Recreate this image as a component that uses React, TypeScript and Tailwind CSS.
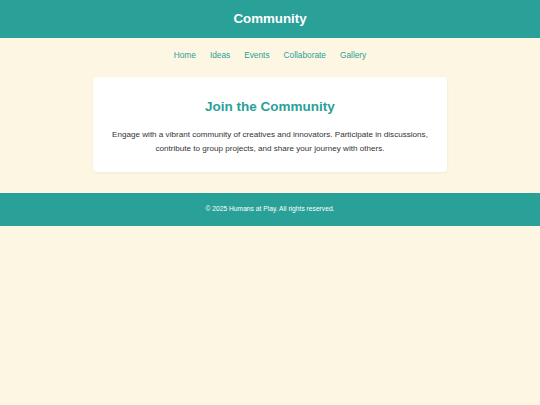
export default function App() {
  const links = ["Home", "Ideas", "Events", "Collaborate", "Gallery"];

  return (
    <div className="min-h-screen bg-[#fdf6e3] font-['Liberation_Sans',Arial,sans-serif]">
      <header className="h-[38px] bg-[#2aa198] flex items-center justify-center">
        <h1 className="text-[13.3px] font-bold text-white">Community</h1>
      </header>

      <nav className="flex justify-center gap-[14px] pt-[11px] pb-[8px]">
        {links.map((l) => (
          <a key={l} href="#" className="text-[8.3px] leading-[12px] text-[#2aa198]">
            {l}
          </a>
        ))}
      </nav>

      <main className="w-[354px] mx-auto mt-[8px] bg-white rounded-[4px] shadow-[0_1px_3px_rgba(0,0,0,0.06)] pt-[22px] pb-[16px] px-[16px] text-center">
        <h2 className="text-[13.5px] leading-[16px] font-bold text-[#2aa198]">Join the Community</h2>
        <p className="mt-[13px] text-[8.1px] leading-[14px] text-[#333]">
          Engage with a vibrant community of creatives and innovators. Participate in discussions,
          contribute to group projects, and share your journey with others.
        </p>
      </main>

      <footer className="mt-[21px] h-[33px] bg-[#2aa198] flex items-center justify-center">
        <p className="text-[6.7px] text-white">© 2025 Humans at Play. All rights reserved.</p>
      </footer>
    </div>
  );
}
